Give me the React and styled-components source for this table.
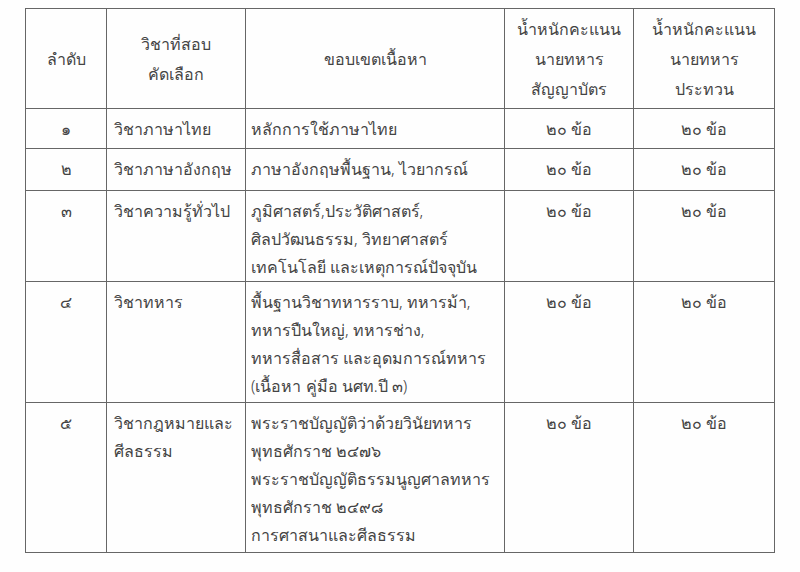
import React from "react";
import styled, { createGlobalStyle } from "styled-components";

const GlobalStyle = createGlobalStyle`
  html, body {
    margin: 0;
    padding: 0;
    background: #ffffff;
  }
  body {
    font-family: "Noto Sans", "DejaVu Sans", sans-serif;
    color: #3c3c3c;
  }
`;

const Page = styled.div`
  width: 800px;
  height: 572px;
  padding: 8px 0 0 25px;
  box-sizing: border-box;
  background: #fefefe;
`;

const Table = styled.table`
  border-collapse: collapse;
  table-layout: fixed;
  width: 749px;
  font-size: 16px;
  font-weight: 300;
  line-height: 28px;
`;

const Row = styled.tr`
  height: ${({ h }) => h}px;
`;

const HeadCell = styled.th`
  border: 1px solid #666;
  font-weight: 300;
  text-align: center;
  vertical-align: middle;
  padding: 0 4px;
  line-height: 30px;
  color: #444;
`;

const Cell = styled.td`
  border: 1px solid #666;
  vertical-align: top;
  text-align: ${({ center }) => (center ? "center" : "left")};
  padding: 6px 4px 0 ${({ center, pl }) => (center ? "4px" : `${pl || 6}px`)};
  color: #444;
  white-space: nowrap;
`;

const Line = styled.div``;

const cols = [81, 139, 259, 129, 141];

const rows = [
  {
    no: "๑",
    subject: ["วิชาภาษาไทย"],
    scope: ["หลักการใช้ภาษาไทย"],
    h: 40,
  },
  {
    no: "๒",
    subject: ["วิชาภาษาอังกฤษ"],
    scope: ["ภาษาอังกฤษพื้นฐาน, ไวยากรณ์"],
    h: 42,
  },
  {
    no: "๓",
    subject: ["วิชาความรู้ทั่วไป"],
    scope: [
      "ภูมิศาสตร์,ประวัติศาสตร์,",
      "ศิลปวัฒนธรรม, วิทยาศาสตร์",
      "เทคโนโลยี และเหตุการณ์ปัจจุบัน",
    ],
    h: 90,
  },
  {
    no: "๔",
    subject: ["วิชาทหาร"],
    scope: [
      "พื้นฐานวิชาทหารราบ, ทหารม้า,",
      "ทหารปืนใหญ่, ทหารช่าง,",
      "ทหารสื่อสาร และอุดมการณ์ทหาร",
      "(เนื้อหา คู่มือ นศท.ปี ๓)",
    ],
    h: 121,
  },
  {
    no: "๕",
    subject: ["วิชากฎหมายและ", "ศีลธรรม"],
    scope: [
      "พระราชบัญญัติว่าด้วยวินัยทหาร",
      "พุทธศักราช ๒๔๗๖",
      "พระราชบัญญัติธรรมนูญศาลทหาร",
      "พุทธศักราช ๒๔๙๘",
      "การศาสนาและศีลธรรม",
    ],
    h: 150,
  },
];

const Lines = ({ items }) => items.map((t) => <Line key={t}>{t}</Line>);

export default function App() {
  return (
    <Page>
      <GlobalStyle />
      <Table>
        <colgroup>
          {cols.map((w, i) => (
            <col key={i} style={{ width: w }} />
          ))}
        </colgroup>
        <thead>
          <Row h={100}>
            <HeadCell>ลำดับ</HeadCell>
            <HeadCell>
              <Lines items={["วิชาที่สอบ", "คัดเลือก"]} />
            </HeadCell>
            <HeadCell>ขอบเขตเนื้อหา</HeadCell>
            <HeadCell>
              <Lines items={["น้ำหนักคะแนน", "นายทหาร", "สัญญาบัตร"]} />
            </HeadCell>
            <HeadCell>
              <Lines items={["น้ำหนักคะแนน", "นายทหาร", "ประทวน"]} />
            </HeadCell>
          </Row>
        </thead>
        <tbody>
          {rows.map((r) => (
            <Row key={r.no} h={r.h}>
              <Cell center>{r.no}</Cell>
              <Cell pl={7}>
                <Lines items={r.subject} />
              </Cell>
              <Cell pl={5}>
                <Lines items={r.scope} />
              </Cell>
              <Cell center>๒๐ ข้อ</Cell>
              <Cell center>๒๐ ข้อ</Cell>
            </Row>
          ))}
        </tbody>
      </Table>
    </Page>
  );
}
